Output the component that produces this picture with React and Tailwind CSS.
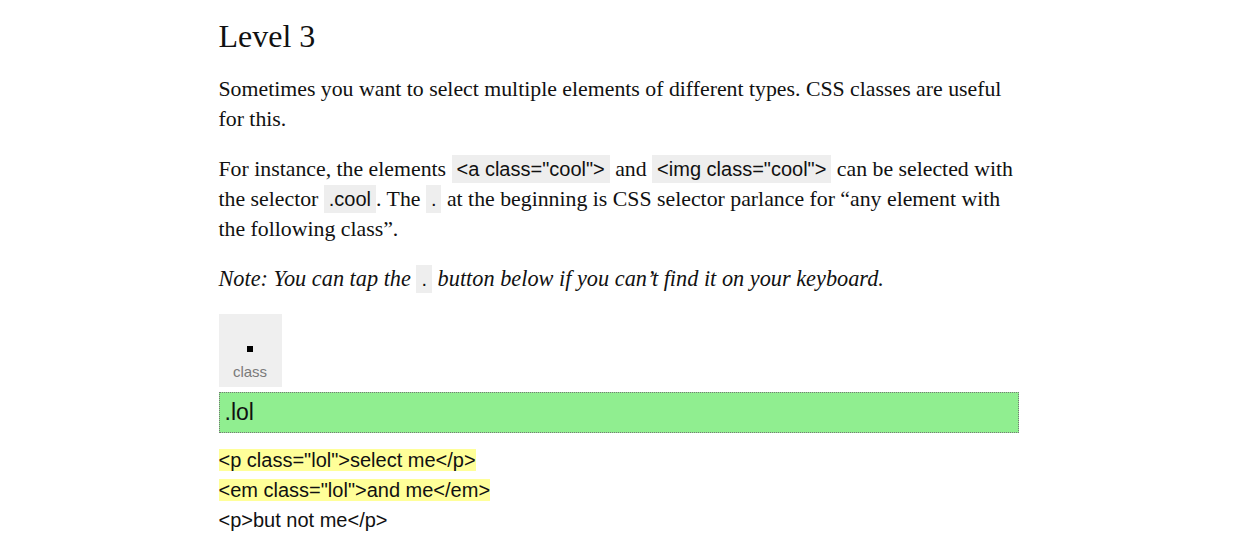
import React, { useState } from "react";

const code = "bg-[#eeeeee] px-[5px] py-[3px] text-[20px] leading-[20px] font-['Liberation_Sans',Arial,sans-serif] not-italic";

export default function App() {
  const [value, setValue] = useState(".lol");

  return (
    <main className="min-h-screen bg-white text-[#111] font-['Liberation_Serif',Georgia,serif]">
      <div className="max-w-[800px] mx-auto pt-[16px]">
        <h1 className="text-[32px] leading-[40px] mb-[18px]">Level 3</h1>

        <p className="text-[21.8px] leading-[30px] mb-[20px]">
          Sometimes you want to select multiple elements of different types. CSS classes are useful for this.
        </p>

        <p className="text-[21.8px] leading-[30px] mb-[20px]">
          For instance, the elements <code className={code}>&lt;a class="cool"&gt;</code> and{" "}
          <code className={code}>&lt;img class="cool"&gt;</code> can be selected with the selector{" "}
          <code className={code}>.cool</code>. The <code className={code}>.</code> at the beginning is CSS selector
          parlance for “any element with the following class”.
        </p>

        <p className="text-[22.3px] leading-[30px] mb-[20px] italic">
          Note: You can tap the <code className={code}>.</code> button below if you can’t find it on your keyboard.
        </p>

        <button className="w-[63px] h-[73px] bg-[#efefef] flex flex-col items-center justify-end pb-[6px] font-['Liberation_Sans',Arial,sans-serif]">
          <span className="w-[6px] h-[6px] bg-black mb-[11px]"></span>
          <span className="text-[15px] leading-[18px] text-[#7a7a7a]">class</span>
        </button>

        <input
          value={value}
          onChange={(e) => setValue(e.target.value)}
          className="mt-[5px] block w-full h-[41px] bg-[#90ee90] border border-dotted border-[#777] px-[5px] text-[23px] text-[#111] font-['Liberation_Sans',Arial,sans-serif] outline-none"
        />

        <div className="mt-[12px] text-[20px] leading-[30px] font-['Liberation_Sans',Arial,sans-serif]">
          <div><span className="bg-[#ffff99]">&lt;p class="lol"&gt;select me&lt;/p&gt;</span></div>
          <div><span className="bg-[#ffff99]">&lt;em class="lol"&gt;and me&lt;/em&gt;</span></div>
          <div>&lt;p&gt;but not me&lt;/p&gt;</div>
        </div>
      </div>
    </main>
  );
}
